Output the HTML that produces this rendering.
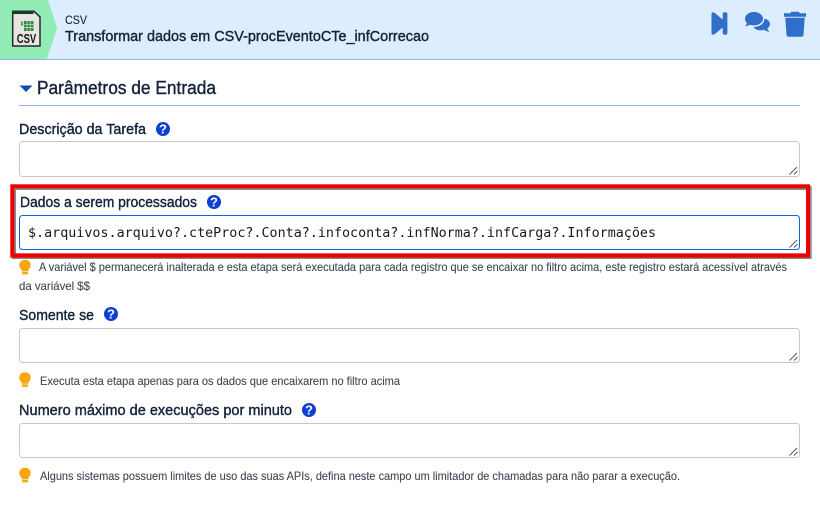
<!DOCTYPE html>
<html><head><meta charset="utf-8"><style>
html,body{margin:0;padding:0;background:#fff;width:820px;height:506px;overflow:hidden}
svg{display:block}
text{font-family:"Liberation Sans",sans-serif;fill:#14233c}
.l{font-size:15px;font-weight:400;stroke:#14233c;stroke-width:.4px}
.h{font-size:12px;fill:#3f4650;stroke:#3f4650;stroke-width:.1px}
</style></head><body>
<svg width="820" height="506" viewBox="0 0 820 506" xmlns="http://www.w3.org/2000/svg">
<defs>
<g id="q"><circle cx="0" cy="0" r="7" fill="#0d3fd6"/><text x="0" y="4.600" text-anchor="middle" style="font-size:13px;font-weight:700;fill:#fff">?</text></g>
<g id="b"><path d="M0-7.200C-3.700-7.200-5.800-4.500-5.800-1.800C-5.800 .8-3.600 1.800-3 4.300H3C3.600 1.800 5.800 .8 5.800-1.800C5.800-4.500 3.700-7.200 0-7.200Z" fill="#f9a60f"/><rect x="-2.900" y="4.800" width="5.800" height="2.600" fill="#f9a60f"/></g>
<g id="g"><path d="M789.500 174.500L797 167M794 174.500L797.500 171" stroke="#555" stroke-width=".9" fill="none"/></g>
</defs>
<rect width="820" height="59" fill="#dcedff"/>
<rect y="59" width="820" height="1" fill="#8fb6ea"/>
<path d="M0 0H48L57 28L47 59H0Z" fill="#93ecb6"/>
<path d="M12.700 11.300H34L40 17V46H12.700Z" fill="#e6e6df" stroke="#262a2a" stroke-width="1.500"/>
<rect x="12" y="10.600" width="21.500" height="3.400" fill="#1c3a2c"/>
<rect x="24" y="21" width="9.500" height="10" fill="#2e8a4a"/>
<path d="M24 24.300H33.500M24 27.600H33.500M27 21V31M30.200 21V31" stroke="#d8e8d4" stroke-width=".7"/>
<path d="M20.800 21.500L23 25.500M23 21.500L20.800 25.500" stroke="#2e8a4a" stroke-width=".9"/>
<text x="26.500" y="43" text-anchor="middle" style="font-size:12.500px;font-weight:700;fill:#15181a" textLength="19.500" lengthAdjust="spacingAndGlyphs">CSV</text>
<text x="65" y="24" style="font-size:11.500px;stroke:#14233c;stroke-width:.1px" textLength="22" lengthAdjust="spacingAndGlyphs">CSV</text>
<text x="65" y="41" class="l" style="font-size:15px" textLength="364" lengthAdjust="spacingAndGlyphs">Transformar dados em CSV-procEventoCTe_infCorrecao</text>
<path d="M711.500 14C711.500 12.300 713.300 11.800 714.500 12.700L722.700 19.500V14C722.700 13 723.300 12.300 724.300 12.300H725.800C726.800 12.300 727.400 13 727.400 14V33C727.400 34 726.800 34.700 725.800 34.700H724.300C723.300 34.700 722.700 34 722.700 33V27.500L714.500 34.300C713.300 35.200 711.500 34.700 711.500 33Z" fill="#2f6fca"/>
<path d="M754 12C749 12 745 15 745 18.800C745 20.500 745.800 22 747 23.200C746.700 24.500 745.800 25.500 745 26.200C747 26.200 748.700 25.500 750 24.600C751.200 25.100 752.600 25.400 754 25.400C759 25.400 763 22.400 763 18.800C763 15 759 12 754 12Z" fill="#2f6fca"/>
<path d="M764.500 18.500C764.700 22.800 760.500 26.800 753.500 27C755 29.300 757.500 30.300 760.500 30.300C761.800 30.300 763 30.100 764 29.600C765.300 30.700 767 31.500 769.500 31.700C768.500 30.800 767.700 29.700 767.300 28.400C769 27.200 770 25.700 770 24C770 21.500 767.800 19.400 764.500 18.500Z" fill="#2f6fca"/>
<path d="M784 13.300H790.500L791 11.800H799L799.500 13.300H806V16.700H784Z" fill="#2f6fca"/>
<path d="M785.300 17.800H804.700L803.500 35C803.400 36.200 802.500 36.800 801.300 36.800H788.700C787.500 36.800 786.600 36.200 786.500 35Z" fill="#2f6fca"/>
<path d="M19.500 85.500H32.500L26 92Z" fill="#0f4fb5"/>
<text x="37" y="94" style="font-size:18.500px;stroke:#14233c;stroke-width:.4px" textLength="179" lengthAdjust="spacingAndGlyphs">Parâmetros de Entrada</text>
<rect x="19" y="105" width="781" height="1" fill="#8fb6ea"/>
<text x="19" y="134" class="l" textLength="127" lengthAdjust="spacingAndGlyphs">Descrição da Tarefa</text>
<use href="#q" x="163" y="129"/>
<rect x="19.500" y="141.500" width="780" height="35" rx="3" fill="#fff" stroke="#c8c8c8"/>
<use href="#g"/>
<rect x="12" y="186" width="799.700" height="73" fill="#8a8a8a"/>
<rect x="10.300" y="184.300" width="799.700" height="73.400" fill="#ec0000"/>
<rect x="14.300" y="188.300" width="791.700" height="65" fill="#8a8a8a"/>
<rect x="16" y="190" width="790" height="63.300" fill="#fff"/>
<text x="20" y="207" class="l" textLength="177" lengthAdjust="spacingAndGlyphs">Dados a serem processados</text>
<use href="#q" x="214" y="202"/>
<rect x="19.500" y="215.500" width="780" height="34" rx="3" fill="#fff" stroke="#0b63e5"/>
<text x="28" y="237" style='font-family:"DejaVu Sans Mono",monospace;font-size:13.300px;fill:#1a1a1a' textLength="628" lengthAdjust="spacingAndGlyphs">$.arquivos.arquivo?.cteProc?.Conta?.infoconta?.infNorma?.infCarga?.Informações</text>
<use href="#g" y="73"/>
<use href="#b" x="25" y="267"/>
<text x="39" y="271" class="h" textLength="748" lengthAdjust="spacingAndGlyphs">A variável $ permanecerá inalterada e esta etapa será executada para cada registro que se encaixar no filtro acima, este registro estará acessível através</text>
<text x="19" y="290" class="h" textLength="71" lengthAdjust="spacingAndGlyphs">da variável $$</text>
<text x="19" y="320" class="l" textLength="75" lengthAdjust="spacingAndGlyphs">Somente se</text>
<use href="#q" x="111" y="314"/>
<rect x="19.500" y="328.500" width="780" height="34" rx="3" fill="#fff" stroke="#c8c8c8"/>
<use href="#g" y="186"/>
<use href="#b" x="25" y="379.500"/>
<text x="40" y="385" class="h" textLength="360" lengthAdjust="spacingAndGlyphs">Executa esta etapa apenas para os dados que encaixarem no filtro acima</text>
<text x="19" y="415" class="l" textLength="273" lengthAdjust="spacingAndGlyphs">Numero máximo de execuções por minuto</text>
<use href="#q" x="309" y="410"/>
<rect x="19.500" y="423.500" width="780" height="34" rx="3" fill="#fff" stroke="#c8c8c8"/>
<use href="#g" y="281"/>
<use href="#b" x="25" y="475"/>
<text x="40" y="480" class="h" textLength="640" lengthAdjust="spacingAndGlyphs">Alguns sistemas possuem limites de uso das suas APIs, defina neste campo um limitador de chamadas para não parar a execução.</text>
</svg>
</body></html>
